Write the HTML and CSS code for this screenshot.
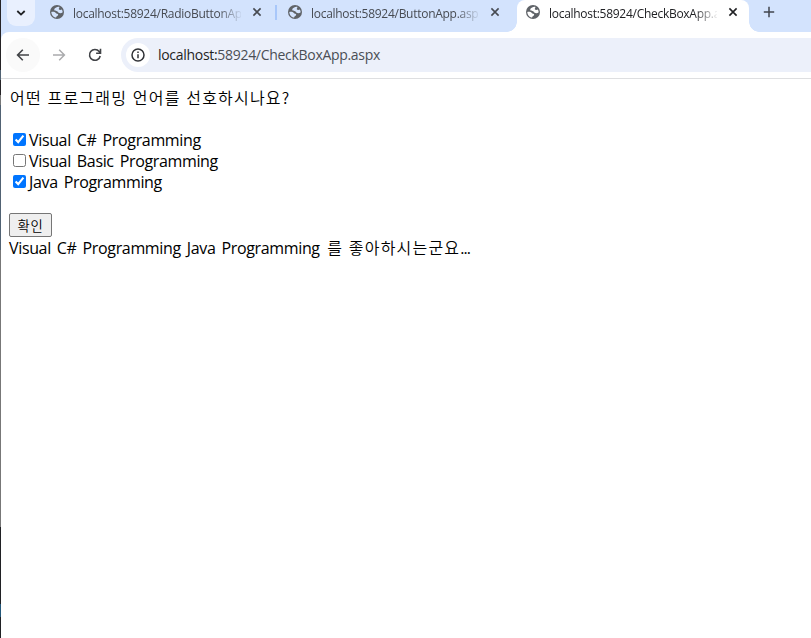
FILE: index.html
```html
<!DOCTYPE html>
<html lang="ko">
<head>
<meta charset="utf-8">
<title>CheckBoxApp</title>
<link rel="stylesheet" href="styles.css">
</head>
<body>
<svg class="defs" width="0" height="0" aria-hidden="true">
  <symbol id="globe" viewBox="0 0 14 14">
    <circle cx="7" cy="7" r="7" fill="#5f6368"/>
    <path class="land" d="M9.2 1.7C7 1.5 4.3 3 4.2 4.7C4.3 6.1 7.4 5.4 7.8 6.8C8.2 8.5 11.4 8.6 12.7 7.3C12.7 6.2 12.3 5.2 11.8 4.4C10.8 5.2 9 5 8.8 4C8.7 3.1 9.8 2.7 9.2 1.7ZM1.3 6.9C3 6.5 5.3 6.9 5.8 8C6.2 8.9 8.3 8.5 8.2 9.8C8 11 6.4 10.8 6.1 12.6C3.4 12.3 1.4 9.9 1.3 6.9Z"/>
  </symbol>
  <symbol id="close" viewBox="0 0 10 10"><path d="M1.4 1.4 8.6 8.6M8.6 1.4 1.4 8.6" fill="none" stroke="currentColor" stroke-width="1.6"/></symbol>
</svg>
<div class="window">
  <div class="edge"></div>
  <div class="browser">
    <header class="tabs">
      <button class="search"><svg width="10" height="6" viewBox="0 0 10 6"><path d="M1.3 1 5 4.6 8.7 1" fill="none" stroke="#1f2023" stroke-width="1.8"/></svg></button>
      <div class="tab first"><svg class="globe"><use href="#globe"/></svg><span class="title">localhost:58924/RadioButtonApp.aspx</span><svg class="close"><use href="#close"/></svg></div>
      <i class="separator"></i>
      <div class="tab second"><svg class="globe"><use href="#globe"/></svg><span class="title">localhost:58924/ButtonApp.aspx</span><svg class="close"><use href="#close"/></svg></div>
      <div class="tab active"><svg class="globe"><use href="#globe"/></svg><span class="title">localhost:58924/CheckBoxApp.aspx</span><svg class="close"><use href="#close"/></svg></div>
      <svg class="plus" width="12" height="12" viewBox="0 0 12 12"><path d="M6 .8V11.2M.8 6H11.2" stroke="#41464d" stroke-width="1.5"/></svg>
    </header>
    <nav class="toolbar">
      <span class="nav back"><svg width="14" height="12" viewBox="0 0 14 12"><path d="M13 6H1.8M6.8.8 1.6 6 6.8 11.2" fill="none" stroke="#414347" stroke-width="1.6"/></svg></span>
      <span class="nav"><svg width="14" height="12" viewBox="0 0 14 12"><path d="M1 6H12.2M7.2.8 12.4 6 7.2 11.2" fill="none" stroke="#aaabad" stroke-width="1.5"/></svg></span>
      <span class="nav"><svg width="14" height="14" viewBox="0 0 14 14"><path d="M12.2 8A5.4 5.4 0 1 1 11.2 3.6L12.5 5M12.5.8V5.2H8.1" fill="none" stroke="#414347" stroke-width="1.6"/></svg></span>
      <div class="address">
        <span class="info"><svg width="14" height="14" viewBox="0 0 14 14"><circle cx="7" cy="7" r="6" fill="none" stroke="#303236" stroke-width="1.5"/><path d="M7 6.2V10.3M7 3.6V5.1" stroke="#303236" stroke-width="1.5"/></svg></span>
        <span class="url"><b>localhost:</b>58924/CheckBoxApp.aspx</span>
      </div>
    </nav>
    <main>
      <p class="question">어떤 프로그래밍 언어를 선호하시나요?</p>
      <div class="options">
        <label><input type="checkbox" checked><span>Visual C# Programming</span></label>
        <label><input type="checkbox"><span>Visual Basic Programming</span></label>
        <label><input type="checkbox" checked><span>Java Programming</span></label>
      </div>
      <button class="confirm">확인</button>
      <p class="result">Visual C# Programming Java Programming <span class="ko">를 좋아하시는군요</span><span class="dots">...</span></p>
    </main>
  </div>
</div>
</body>
</html>
```

FILE: styles.css
```css
* { box-sizing: border-box; }
body { margin: 0; background: #fff; color: #000; font-family: "Open Sans", "Noto Sans CJK KR", sans-serif; }
svg { display: block; flex: none; }
.defs { position: absolute; }
.window { display: flex; height: 638px; overflow: hidden; }
.edge { width: 1px; flex: none; background: linear-gradient(#252326 0 70px, #516273 70px 80px, #252326 80px 95px, #777 95px 105px, #516273 105px 250px, #777 250px 527px, #202124 527px 604px, #235779 604px 617px, #202124 617px); }
.browser { flex: 1; min-width: 0; background: #d3e3fd; }

.tabs { display: flex; height: 32px; background: #d3e3fd; overflow: hidden; }
.search { width: 28px; height: 26px; margin-left: 6px; padding: 0; border: 0; border-radius: 0 0 9px 9px; background: #e9f0fe; display: flex; align-items: center; justify-content: center; flex: none; }
.tab { display: flex; height: 32px; flex: none; padding-top: 5px; color: #474b52; }
.tab.first { width: 226px; margin-left: 14px; }
.tab.second { width: 239px; padding-left: 10px; }
.tab.active { width: 232px; margin-left: 1px; padding-left: 8px; background: #fff; border-radius: 8px 8px 0 0; color: #202124; position: relative; --land: #fff; }
.tab.active::before, .tab.active::after { content: ""; position: absolute; bottom: 0; width: 10px; height: 10px; }
.tab.active::before { left: -10px; background: radial-gradient(circle at 0 0, transparent 9.5px, #fff 10px); }
.tab.active::after { right: -10px; background: radial-gradient(circle at 100% 0, transparent 9.5px, #fff 10px); }
.globe { width: 14px; height: 14px; margin: 0 0 0 1px; }
.land { fill: var(--land, #d3e3fd); }
.title { width: 168px; margin-left: 9px; font-size: 12px; line-height: 17px; letter-spacing: -.28px; white-space: nowrap; overflow: hidden; -webkit-mask-image: linear-gradient(90deg, #000 145px, transparent 170px); mask-image: linear-gradient(90deg, #000 145px, transparent 170px); flex: none; }
.close { width: 10px; height: 10px; margin: 2px 0 0 11px; }
.separator { width: 2px; height: 15px; margin-top: 5px; background: #a8c7fa; flex: none; }
.plus { margin: 6px 0 0 14px; }

.toolbar { display: flex; align-items: center; height: 47px; padding-left: 5px; border-bottom: 1px solid #dedfe1; border-top-left-radius: 8px; background: #fff; }
.nav { width: 34px; height: 34px; margin-right: 2px; display: flex; align-items: center; justify-content: center; border-radius: 50%; flex: none; }
.back { background: #fafafa; }
.address { display: flex; align-items: center; flex: 1; height: 34px; margin-left: 7px; padding-left: 5px; border-radius: 17px 0 0 17px; background: #ecf0fa; }
.info { width: 24px; height: 24px; border-radius: 50%; background: #fff; display: flex; align-items: center; justify-content: center; }
.url { margin-left: 8px; padding-bottom: 1px; font-size: 14px; color: #4a4e55; letter-spacing: -.3px; white-space: nowrap; }
.url b { font-weight: 400; color: #1f1f1f; }

main { height: 559px; padding: 8px; background: #fff; font-size: 16px; line-height: 21px; letter-spacing: -.35px; word-spacing: 2.2px; }
p { margin: 0; white-space: nowrap; }
.question { padding-left: 1px; font-family: "Noto Sans CJK KR", sans-serif; font-weight: 350; letter-spacing: 1.2px; word-spacing: 0; }
.options { margin: 22px 0 20px; }
.options label { display: flex; height: 21px; }
.options input { width: 13px; height: 13px; margin: 3px 3px 0 4px; flex: none; }
.confirm { display: block; width: 43px; height: 24px; padding: 1px 0 0; border: 1px solid #767676; border-radius: 2px; background: #efefef; color: #000; font: 350 13.33px/20px "Noto Sans CJK KR", sans-serif; letter-spacing: .8px; }
.result { height: 21px; margin-top: 1px; }
.ko { margin-left: 1.5px; font-family: "Noto Sans CJK KR", sans-serif; font-weight: 350; letter-spacing: 1.2px; word-spacing: 0; line-height: 1; }
.dots { letter-spacing: -1px; }
```
